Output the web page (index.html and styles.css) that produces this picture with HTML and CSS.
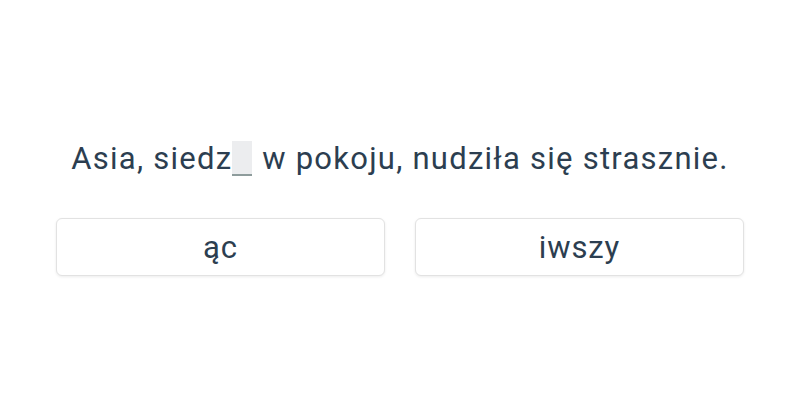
FILE: index.html
```html
<!DOCTYPE html>
<html lang="pl">
<head>
<meta charset="utf-8">
<link rel="stylesheet" href="styles.css">
</head>
<body>
<main class="quiz">
  <p class="sentence">Asia, siedz<span class="blank"></span> w pokoju, nudziła się strasznie.</p>
  <div class="options">
    <button class="option">ąc</button>
    <button class="option">iwszy</button>
  </div>
</main>
</body>
</html>
```
FILE: styles.css
```css
html, body {
  margin: 0;
  height: 100%;
  background: #ffffff;
}
body {
  font-family: Roboto, "Liberation Sans", sans-serif;
  color: #2c3e50;
}
.quiz {
  height: 100%;
  display: flex;
  flex-direction: column;
  align-items: center;
  justify-content: center;
  padding-top: 17px;
  box-sizing: border-box;
}
.sentence {
  margin: 0 0 41px;
  font-size: 31px;
  line-height: 36px;
  letter-spacing: 1.25px;
}
.blank {
  display: inline-block;
  width: 20px;
  height: 35px;
  vertical-align: -7px;
  background: #ecedef;
  border-bottom: 2px solid #8e9c9c;
  box-sizing: border-box;
  margin: 0 1px 0 0;
}
.options {
  display: grid;
  grid-template-columns: 1fr 1fr;
  gap: 30px;
  width: 688px;
}
.option {
  height: 58px;
  background: #fff;
  border: 1px solid #e2e2e2;
  border-radius: 6px;
  box-shadow: 0 1px 3px rgba(0,0,0,0.08);
  font-family: Roboto, "Liberation Sans", sans-serif;
  font-size: 31px;
  letter-spacing: 0.9px;
  color: #2c3e50;
  padding: 0;
}
```
